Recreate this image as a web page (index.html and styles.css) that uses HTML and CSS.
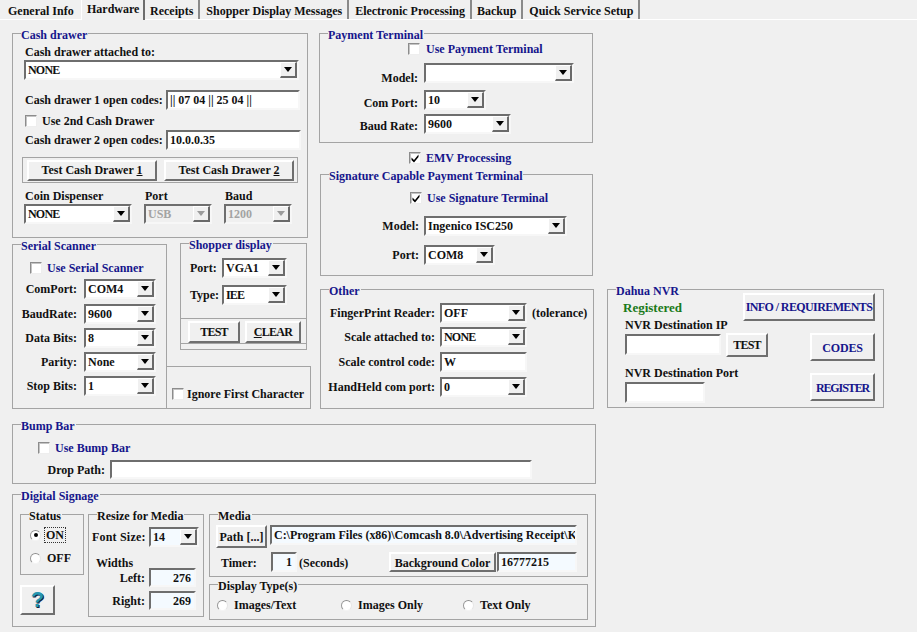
FILE: index.html
```html
<!DOCTYPE html>
<html lang="en">
<head>
<meta charset="utf-8">
<title>Hardware</title>
<link rel="stylesheet" href="styles.css">
</head>
<body>
<svg class="defs" width="0" height="0"><defs>
<symbol id="arr" viewBox="0 0 8 5"><path d="M0 0h8L4 5z"/></symbol>
<symbol id="tick" viewBox="0 0 10 10"><path d="M1.5 4.5l2.5 2.5 4.5-5.5v2.5l-4.5 5.5-2.5-2.5z"/></symbol>
</defs></svg>
<nav class="tabs">
  <span class="tab tab-first">General Info</span>
  <span class="tab tab-active">Hardware</span>
  <span class="tab">Receipts</span>
  <span class="tab tab-wide">Shopper Display Messages</span>
  <span class="tab tab-wide">Electronic Processing</span>
  <span class="tab">Backup</span>
  <span class="tab tab-wide">Quick Service Setup</span>
</nav>
<main class="main">
  <div class="top">
    <div class="col-left">
      <section class="group cash">
        <span class="legend">Cash drawer</span>
        <div class="cash-title">Cash drawer attached to:</div>
        <div class="combo w275 cash-combo"><span class="val tight">NONE</span><span class="drop"><svg class="arrow"><use href="#arr"/></svg></span></div>
        <div class="row cash-r1"><span class="cash-lab">Cash drawer 1 open codes:</span><span class="field w134">|| 07 04 || 25 04 ||</span></div>
        <div class="check-row cash-chk"><span class="box"></span><span class="check-lab">Use 2nd Cash Drawer</span></div>
        <div class="row cash-r2"><span class="cash-lab">Cash drawer 2 open codes:</span><span class="field w135">10.0.0.35</span></div>
        <div class="btn-box cash-btns"><button class="btn cash-btn">Test Cash Drawer <u>1</u></button><button class="btn cash-btn">Test Cash Drawer <u>2</u></button></div>
        <div class="cash-bottom">
          <div><div class="sub-lab">Coin Dispenser</div><div class="combo w108"><span class="val tight">NONE</span><span class="drop"><svg class="arrow"><use href="#arr"/></svg></span></div></div>
          <div><div class="sub-lab">Port</div><div class="combo w68 off"><span class="val">USB</span><span class="drop"><svg class="arrow"><use href="#arr"/></svg></span></div></div>
          <div><div class="sub-lab">Baud</div><div class="combo w68 off"><span class="val">1200</span><span class="drop"><svg class="arrow"><use href="#arr"/></svg></span></div></div>
        </div>
      </section>
      <div class="left-lower">
        <section class="group serial">
          <span class="legend">Serial Scanner</span>
          <div class="check-row serial-chk"><span class="box"></span><span class="check-lab blue">Use Serial Scanner</span></div>
          <div class="serial-rows">
            <div class="row"><span class="serial-lab">ComPort:</span><div class="combo w72"><span class="val">COM4</span><span class="drop"><svg class="arrow"><use href="#arr"/></svg></span></div></div>
            <div class="row"><span class="serial-lab">BaudRate:</span><div class="combo w72"><span class="val">9600</span><span class="drop"><svg class="arrow"><use href="#arr"/></svg></span></div></div>
            <div class="row"><span class="serial-lab">Data Bits:</span><div class="combo w72"><span class="val">8</span><span class="drop"><svg class="arrow"><use href="#arr"/></svg></span></div></div>
            <div class="row"><span class="serial-lab">Parity:</span><div class="combo w72"><span class="val">None</span><span class="drop"><svg class="arrow"><use href="#arr"/></svg></span></div></div>
            <div class="row"><span class="serial-lab">Stop Bits:</span><div class="combo w72"><span class="val">1</span><span class="drop"><svg class="arrow"><use href="#arr"/></svg></span></div></div>
          </div>
        </section>
        <div class="lower-right">
          <section class="group shopper">
            <span class="legend">Shopper display</span>
            <div class="row shop-r1"><span class="shop-lab">Port:</span><div class="combo w65"><span class="val">VGA1</span><span class="drop"><svg class="arrow"><use href="#arr"/></svg></span></div></div>
            <div class="row shop-r2"><span class="shop-lab">Type:</span><div class="combo w65"><span class="val tight">IEE</span><span class="drop"><svg class="arrow"><use href="#arr"/></svg></span></div></div>
            <div class="btn-box shop-btns"><button class="btn shop-test">TEST</button><button class="btn shop-clear"><u>C</u>LEAR</button></div>
          </section>
          <section class="group ignore">
            <div class="check-row ignore-chk"><span class="box"></span><span class="check-lab">Ignore First Character</span></div>
          </section>
        </div>
      </div>
    </div>
    <div class="col-mid">
      <section class="group pay">
        <span class="legend">Payment Terminal</span>
        <div class="check-row pay-chk"><span class="box"></span><span class="check-lab blue">Use Payment Terminal</span></div>
        <div class="row pay-r1"><span class="pay-lab lab-low2">Model:</span><div class="combo w150"><span class="val"></span><span class="drop"><svg class="arrow"><use href="#arr"/></svg></span></div></div>
        <div class="row pay-r2"><span class="pay-lab lab-low0">Com Port:</span><div class="combo w62"><span class="val">10</span><span class="drop"><svg class="arrow"><use href="#arr"/></svg></span></div></div>
        <div class="row pay-r3"><span class="pay-lab lab-low1">Baud Rate:</span><div class="combo w87"><span class="val">9600</span><span class="drop"><svg class="arrow"><use href="#arr"/></svg></span></div></div>
      </section>
      <div class="check-row emv"><span class="box"><svg class="tick"><use href="#tick"/></svg></span><span class="check-lab blue">EMV Processing</span></div>
      <section class="group sig">
        <span class="legend">Signature Capable Payment Terminal</span>
        <div class="check-row sig-chk"><span class="box"><svg class="tick"><use href="#tick"/></svg></span><span class="check-lab blue">Use Signature Terminal</span></div>
        <div class="row sig-r1"><span class="sig-lab">Model:</span><div class="combo w143"><span class="val">Ingenico ISC250</span><span class="drop"><svg class="arrow"><use href="#arr"/></svg></span></div></div>
        <div class="row sig-r2"><span class="sig-lab">Port:</span><div class="combo w71"><span class="val">COM8</span><span class="drop"><svg class="arrow"><use href="#arr"/></svg></span></div></div>
      </section>
      <section class="group other">
        <span class="legend">Other</span>
        <div class="row oth-r1"><span class="oth-lab">FingerPrint Reader:</span><div class="combo w87"><span class="val">OFF</span><span class="drop"><svg class="arrow"><use href="#arr"/></svg></span></div><span class="tol">(tolerance)</span></div>
        <div class="row oth-r2"><span class="oth-lab">Scale attached to:</span><div class="combo w87"><span class="val tight">NONE</span><span class="drop"><svg class="arrow"><use href="#arr"/></svg></span></div></div>
        <div class="row oth-r3"><span class="oth-lab">Scale control code:</span><span class="field w87">W</span></div>
        <div class="row oth-r3"><span class="oth-lab">HandHeld com port:</span><div class="combo w87"><span class="val">0</span><span class="drop"><svg class="arrow"><use href="#arr"/></svg></span></div></div>
      </section>
    </div>
    <section class="group dahua">
      <span class="legend">Dahua NVR</span>
      <div class="dahua-top"><span class="registered">Registered</span><button class="btn blue dahua-info">INFO / REQUIREMENTS</button></div>
      <div class="dahua-main">
        <div class="dahua-left">
          <div class="sub-lab">NVR Destination IP</div>
          <div class="dahua-ip"><span class="field dahua-f1"></span><button class="btn dahua-test">TEST</button></div>
          <div class="sub-lab dahua-l2">NVR Destination Port</div>
          <span class="field dahua-f2"></span>
        </div>
        <div class="dahua-right">
          <button class="btn blue dahua-side dahua-codes">CODES</button>
          <button class="btn blue dahua-side dahua-reg">REGISTER</button>
        </div>
      </div>
    </section>
  </div>
  <section class="group bump">
    <span class="legend">Bump Bar</span>
    <div class="check-row bump-chk"><span class="box"></span><span class="check-lab blue">Use Bump Bar</span></div>
    <div class="row bump-row"><span class="bump-lab">Drop Path:</span><span class="field bump-f"></span></div>
  </section>
  <section class="group sign">
    <span class="legend">Digital Signage</span>
    <div class="sign-a">
      <section class="group status">
        <span class="legend dark">Status</span>
        <div class="radio-row st-r1"><span class="radio on"></span><span class="focus">ON</span></div>
        <div class="radio-row st-r2"><span class="radio"></span><span class="st-off">OFF</span></div>
      </section>
      <button class="btn help">?</button>
    </div>
    <section class="group resize">
      <span class="legend dark">Resize for Media</span>
      <div class="row rz-r1"><span class="rz-font">Font Size:</span><div class="combo w50 tint"><span class="val">14</span><span class="drop"><svg class="arrow"><use href="#arr"/></svg></span></div></div>
      <div class="rz-widths">Widths</div>
      <div class="row rz-left"><span class="rz-lab">Left:</span><span class="field tint num rz-f">276</span></div>
      <div class="row rz-right"><span class="rz-lab">Right:</span><span class="field tint num rz-f">269</span></div>
    </section>
    <div class="sign-c">
      <section class="group media">
        <span class="legend dark">Media</span>
        <div class="row md-r1"><button class="btn md-path">Path [...]</button><span class="field tint md-pf">C:\Program Files (x86)\Comcash 8.0\Advertising Receipt\K</span></div>
        <div class="row md-r2"><span class="md-timer">Timer:</span><span class="field tint num md-tf">1</span><span class="md-sec">(Seconds)</span><button class="btn md-bg">Background Color</button><span class="field tint md-cf">16777215</span></div>
      </section>
      <section class="group dtype">
        <span class="legend dark">Display Type(s)</span>
        <div class="dt-row">
          <div class="radio-row"><span class="radio"></span><span>Images/Text</span></div>
          <div class="radio-row"><span class="radio"></span><span>Images Only</span></div>
          <div class="radio-row"><span class="radio"></span><span>Text Only</span></div>
        </div>
      </section>
    </div>
  </section>
</main>
</body>
</html>
```
FILE: styles.css
```css
* { box-sizing: border-box; }
html, body { margin: 0; padding: 0; }
body {
  width: 917px; height: 632px; overflow: hidden;
  background: #f0f0f0; color: #111;
  font: bold 12px/14px "Liberation Serif", "Times New Roman", serif;
}
.defs { position: absolute; }
u { text-decoration: underline; }

/* tabs */
.tabs { display: flex; height: 20px; border-bottom: 1px solid #fff; padding-left: 3px; align-items: flex-end; }
.tab { height: 19px; line-height: 22px; padding: 0 5px; border-right: 2px solid #8a8a8a; white-space: nowrap; flex: none; }
.tab-first { width: 78px; border-right: 0; padding-left: 5px; }
.tab-active { width: 64px; height: 20px; line-height: 18px; border-left: 1px solid #fff; border-right: 2px solid #6d6d6d; background: #f0f0f0; margin-bottom: -1px; padding-left: 5px; }
.tab-wide { margin-left: 1px; }

/* page */
.main { padding: 13px 0 0 12px; }
.top { display: flex; height: 376px; }
.col-left { width: 299px; flex: none; }
.col-mid { width: 275px; flex: none; margin-left: 8px; }
.group { position: relative; border: 1px solid #a4a4a4; flex: none; }
.legend { position: absolute; left: 8px; top: -6px; background: #f0f0f0; color: #16168c; padding-right: 1px; white-space: nowrap; }
.legend.dark { color: #111; }
.blue { color: #16168c; }
.row { display: flex; align-items: center; }

/* controls */
.field { display: block; height: 20px; background: #fff; border: 2px solid; border-color: #6e6e6e #f7f7f7 #f7f7f7 #6e6e6e; padding: 0 0 0 2px; line-height: 16px; color: #111; white-space: nowrap; overflow: hidden; flex: none; }
.combo { display: flex; height: 20px; background: #fff; border: 2px solid; border-color: #6e6e6e #f7f7f7 #f7f7f7 #6e6e6e; flex: none; }
.val { flex: 1; padding-left: 2px; line-height: 16px; white-space: nowrap; overflow: hidden; }
.tight { letter-spacing: -.8px; }
.drop { width: 17px; height: 16px; background: #f0f0f0; border: solid #6a6a6a; border-width: 1px 2px 2px 1px; border-color: #fff #6a6a6a #6a6a6a #fff; display: flex; align-items: center; justify-content: center; flex: none; }
.arrow { width: 8px; height: 5px; fill: #000; }
.off { background: #f0f0f0; color: #a3a3a3; }
.off .arrow { fill: #9c9c9c; }
.tint { background: #f4faff; }
.num { text-align: right; padding: 0 3px 0 0; }
.btn { display: block; margin: 0; padding: 0; background: #f0f0f0; border: 2px solid; border-color: #fff #6f6f6f #6f6f6f #fff; font: inherit; color: inherit; white-space: nowrap; flex: none; }
.btn.blue { color: #16168c; }
.btn-box { border: 1px solid #a4a4a4; background: #f0f0f0; display: flex; }
.check-row { display: flex; align-items: center; height: 12px; }
.box { width: 12px; height: 12px; background: #fff; border: 1px solid; border-color: #8c8c8c #eee #eee #8c8c8c; box-shadow: inset 1px 1px 0 #c4c4c4; flex: none; display: flex; align-items: center; justify-content: center; }
.tick { width: 10px; height: 10px; fill: #000; }
.check-lab { margin-left: 5px; white-space: nowrap; }
.radio-row { display: flex; align-items: center; height: 14px; gap: 6px; white-space: nowrap; }
.radio { width: 11px; height: 11px; border-radius: 50%; background: #fff; border: 1px solid; border-color: #8e8e8e #e6e6e6 #f4f4f4 #9a9a9a; display: flex; align-items: center; justify-content: center; flex: none; }
.radio.on::after { content: ""; width: 4px; height: 4px; border-radius: 50%; background: #000; }
.w50 { width: 50px; } .w62 { width: 62px; } .w65 { width: 65px; } .w68 { width: 68px; } .w71 { width: 71px; }
.w72 { width: 72px; } .w87 { width: 87px; } .w108 { width: 108px; } .w134 { width: 134px; } .w135 { width: 135px; }
.w143 { width: 143px; } .w150 { width: 150px; } .w275 { width: 275px; }

/* cash drawer */
.cash { width: 296px; height: 205px; padding-left: 11px; }
.cash-title { margin: 11px 0 0 1px; }
.cash-combo { margin-top: 1px; }
.cash-r1 { margin-top: 10px; }
.cash-lab { width: 142px; padding-left: 1px; white-space: nowrap; }
.cash-chk { margin: 5px 0 0 1px; }
.cash-r2 { margin-top: 3px; }
.cash-btns { margin: 7px 0 0 -2px; width: 276px; height: 26px; padding: 2px 4px; gap: 7px; }
.cash-btn { width: 130px; height: 21px; padding: 0 0 2px; }
.cash-bottom { display: flex; gap: 12px; margin-top: 6px; }
.sub-lab { white-space: nowrap; padding-left: 1px; }
.cash-bottom .combo { margin-top: 1px; }

/* lower left */
.left-lower { display: flex; margin-top: 6px; }
.serial { width: 155px; height: 165px; padding-left: 17px; }
.serial-chk { margin-top: 17px; }
.serial-rows { display: flex; flex-direction: column; gap: 4px; margin: 5px 0 0 -17px; }
.serial-rows .row:nth-child(2) { margin-top: 1px; }
.serial-lab { width: 64px; text-align: right; margin-right: 7px; white-space: nowrap; }
.lower-right { margin-top: -1px; }
.shopper { width: 127px; height: 107px; margin-left: 13px; }
.shop-r1 { margin-top: 14px; }
.shop-r2 { margin-top: 7px; }
.shop-lab { width: 41px; padding-left: 9px; white-space: nowrap; }
.shop-btns { margin: 13px -1px 0; height: 26px; padding: 2px 0 0 7px; gap: 5px; }
.shop-test { width: 52px; height: 22px; letter-spacing: -.8px; }
.shop-clear { width: 56px; height: 22px; letter-spacing: -.7px; }
.ignore { width: 144px; height: 43px; margin-top: 16px; border-left: 0; padding-left: 5px; }
.ignore-chk { margin-top: 21px; }
.ignore-chk .check-lab { margin-left: 3px; }

/* middle */
.pay { width: 274px; height: 110px; }
.pay-chk { margin: 9px 0 0 88px; }
.pay-chk .check-lab { margin-left: 6px; }
.pay-lab { width: 98px; text-align: right; margin-right: 6px; white-space: nowrap; }
.lab-low2 { align-self: flex-end; margin-bottom: -2px; }
.lab-low0 { align-self: flex-end; }
.lab-low1 { align-self: flex-end; margin-bottom: 1px; }
.pay-r1 { margin-top: 8px; }
.pay-r2 { margin-top: 7px; }
.pay-r3 { margin-top: 4px; }
.emv { margin: 9px 0 0 90px; }
.sig { width: 273px; height: 102px; margin: 10px 0 0 1px; }
.sig-chk { margin: 17px 0 0 89px; }
.sig-chk .check-lab { margin-left: 5px; }
.sig-lab { width: 98px; text-align: right; margin-right: 5px; }
.sig-r1 { margin-top: 12px; }
.sig-r2 { margin-top: 9px; }
.other { width: 274px; height: 120px; margin: 13px 0 0 1px; }
.oth-lab { width: 114px; text-align: right; margin-right: 5px; white-space: nowrap; }
.oth-r1 { margin-top: 13px; }
.oth-r2 { margin-top: 4px; }
.oth-r3 { margin-top: 5px; }
.tol { margin-left: 5px; white-space: nowrap; }

/* dahua */
.dahua { width: 277px; height: 119px; margin: 256px 0 0 13px; }
.dahua-top { display: flex; margin-top: 3px; padding-left: 15px; height: 28px; }
.registered { width: 120px; color: #1a7a1a; font-size: 13px; line-height: 30px; }
.dahua-info { width: 132px; height: 28px; letter-spacing: -.6px; }
.dahua-main { display: flex; margin: -3px 0 0 17px; }
.dahua-left { width: 185px; }
.dahua-left .sub-lab { padding-left: 0; }
.dahua-ip { display: flex; gap: 5px; margin-top: 1px; }
.dahua-f1 { width: 96px; height: 21px; margin-top: 1px; }
.dahua-test { width: 42px; height: 24px; letter-spacing: -.8px; }
.dahua-l2 { margin-top: 9px; }
.dahua-f2 { width: 80px; height: 21px; margin-top: 2px; }
.dahua-right { padding-top: 15px; }
.dahua-side { width: 65px; height: 28px; padding-top: 1px; }
.dahua-codes { letter-spacing: -.2px; }
.dahua-reg { margin-top: 12px; letter-spacing: -1.1px; }

/* bump */
.bump { width: 584px; height: 60px; margin-top: 15px; }
.bump-chk { margin: 17px 0 0 25px; }
.bump-chk .check-lab { margin-left: 5px; }
.bump-row { margin-top: 6px; }
.bump-lab { width: 92px; text-align: right; margin-right: 5px; padding-left: 2px; }
.bump-f { width: 422px; height: 19px; }

/* signage */
.sign { width: 584px; height: 133px; margin-top: 10px; padding: 19px 0 0 7px; display: flex; }
.sign-a { width: 64px; flex: none; }
.status { width: 64px; height: 61px; padding-left: 9px; }
.st-r1 { margin-top: 13px; gap: 4px; }
.st-r2 { margin-top: 9px; gap: 6px; }
.focus { outline: 1px dotted #333; padding: 0 1px; }
.help { width: 35px; height: 30px; margin-top: 10px; font: bold 22px/24px "Liberation Sans", sans-serif; color: #2596b0; text-shadow: 1px 1px 0 #124; }
.resize { width: 116px; height: 103px; margin-left: 4px; }
.rz-r1 { margin-top: 12px; }
.rz-font { width: 60px; padding-left: 3px; white-space: nowrap; letter-spacing: .2px; }
.rz-widths { margin: 9px 0 0 7px; }
.rz-left { margin-top: -2px; }
.rz-right { margin-top: 4px; }
.rz-lab { width: 56px; margin-right: 4px; text-align: right; }
.rz-f { width: 47px; height: 19px; }
.sign-c { margin-left: 5px; }
.media { width: 379px; height: 63px; }
.md-r1 { margin: 10px 0 0 6px; align-items: flex-start; gap: 3px; }
.md-path { width: 51px; height: 23px; padding-top: 1px; }
.md-pf { width: 307px; letter-spacing: -.02px; }
.md-r2 { margin: 4px 10px 0 6px; }
.md-timer { width: 55px; padding: 2px 0 0 5px; }
.md-tf { width: 26px; }
.md-sec { margin-left: 2px; padding-top: 2px; }
.md-bg { width: 107px; height: 20px; margin-left: auto; padding-top: 1px; }
.md-cf { width: 80px; margin-left: 1px; }
.dtype { width: 379px; height: 36px; margin-top: 7px; }
.dt-row { display: grid; grid-template-columns: 124px 122px 1fr; margin: 13px 0 0 7px; }
```
